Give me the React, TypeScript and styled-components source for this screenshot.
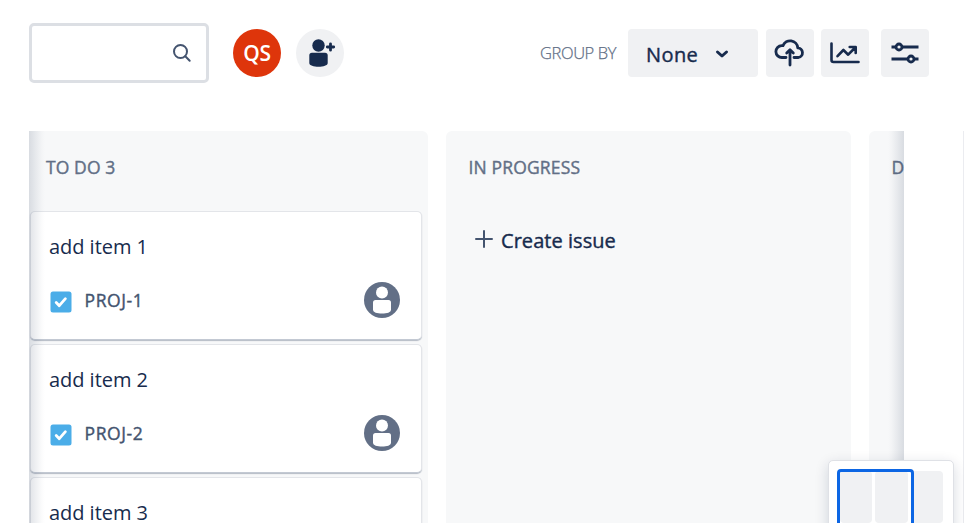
import React from "react";
import styled, { createGlobalStyle } from "styled-components";

const GlobalStyle = createGlobalStyle`
  * { box-sizing: border-box; }
  body {
    margin: 0;
    background: #fff;
    color: #172b4d;
    font-family: "Segoe UI", "Open Sans", "Noto Sans", sans-serif;
    overflow: hidden;
  }
  button { font: inherit; color: inherit; border: 0; padding: 0; cursor: pointer; }
`;

const Page = styled.div`
  position: relative;
  width: 964px;
  height: 523px;
  overflow: hidden;
`;

const Toolbar = styled.header`
  display: flex;
  align-items: center;
  height: 60px;
  margin: 23px 35px 0 29px;
`;

const SearchField = styled.label`
  display: flex;
  align-items: center;
  justify-content: flex-end;
  width: 180px;
  height: 60px;
  padding-right: 14px;
  border: 3px solid #dcdfe4;
  border-radius: 5px;
`;

const SearchInput = styled.input`
  flex: 1;
  min-width: 0;
  border: 0;
  outline: 0;
  background: transparent;
  font: inherit;
`;

const Round = styled.button<{ $bg: string; $gap: number }>`
  display: grid;
  place-items: center;
  width: 48px;
  height: 48px;
  margin-left: ${(p) => p.$gap}px;
  border-radius: 50%;
  background: ${(p) => p.$bg};
`;

const Initials = styled.span`
  color: #fff;
  font-size: 21px;
  font-weight: 600;
  letter-spacing: -0.2px;
  line-height: 48px;
`;

const Actions = styled.div`
  display: flex;
  align-items: center;
  margin-left: auto;
`;

const GroupLabel = styled.span`
  margin: -2px 12px 0 0;
  width: 76px;
  white-space: nowrap;
  color: #626f86;
  font-size: 16.5px;
  font-weight: 300;
  letter-spacing: -0.4px;
  -webkit-text-stroke: 0.25px;
`;

const GroupSelect = styled.button`
  display: flex;
  align-items: center;
  width: 130px;
  height: 48px;
  padding: 3px 29px 0 18px;
  justify-content: space-between;
  border-radius: 4px;
  background: #f0f1f3;
  font-size: 20px;
  letter-spacing: 0.4px;
  -webkit-text-stroke: 0.4px;
`;

const ToolButton = styled.button<{ $gap: number }>`
  display: grid;
  place-items: center;
  width: 48px;
  height: 48px;
  margin-left: ${(p) => p.$gap}px;
  border-radius: 4px;
  background: #f0f1f3;
`;

const BoardRow = styled.div`
  display: flex;
  justify-content: space-between;
  margin: 48px 0 0 29px;
  height: 392px;
`;

const Board = styled.main`
  position: relative;
  display: flex;
  gap: 18px;
  width: 875px;
  overflow: hidden;
`;

const EdgeShade = styled.div<{ $side: "left" | "right" }>`
  position: absolute;
  top: 0;
  bottom: 0;
  ${(p) => p.$side}: 0;
  width: 16px;
  pointer-events: none;
  background: linear-gradient(
    to ${(p) => (p.$side === "left" ? "right" : "left")},
    rgba(9, 30, 66, 0.13),
    rgba(9, 30, 66, 0.07) 40%,
    rgba(9, 30, 66, 0.015) 80%,
    transparent
  );
`;

const PageEdge = styled.div`
  width: 1px;
  background: #ebecf0;
`;

const Column = styled.section<{ $first?: boolean }>`
  flex: none;
  width: ${(p) => (p.$first ? 399 : 405)}px;
  padding: ${(p) => (p.$first ? "0 6px 0 1px" : "0")};
  border-radius: ${(p) => (p.$first ? "0 6px 0 0" : "6px 6px 0 0")};
  background: #f7f8f9;
`;

const ColumnTitle = styled.h2<{ $inset: number; $track: number }>`
  height: 80px;
  margin: 0;
  padding: 23px 0 0 ${(p) => p.$inset}px;
  color: #626f86;
  font-size: 17.5px;
  line-height: 26px;
  font-weight: 400;
  letter-spacing: ${(p) => p.$track}px;
  -webkit-text-stroke: 0.4px;
  white-space: nowrap;
`;

const Card = styled.article`
  height: 129px;
  margin-bottom: 4px;
  padding: 20px 21px 0 18px;
  border: 1px solid #e3e5e9;
  border-bottom-color: #c3c9d3;
  border-radius: 5px;
  background: #fff;
  box-shadow: 0 1px 1px rgba(9, 30, 66, 0.28);
`;

const CardTitle = styled.div`
  height: 49px;
  font-size: 20px;
  line-height: 30px;
  letter-spacing: -0.04px;
`;

const CardFooter = styled.div`
  display: flex;
  align-items: center;
  height: 38px;
`;

const IssueKey = styled.span`
  margin-left: 12.500px;
  color: #44546f;
  font-size: 17.5px;
  line-height: 36px;
  letter-spacing: 0.6px;
  -webkit-text-stroke: 0.4px;
  transform: translateY(-0.500px);
`;

const Assignee = styled.svg`
  margin-left: auto;
`;

const TaskIcon = styled.svg`
  margin: 3px 0 0 1px;
`;

const CreateIssue = styled.button`
  display: flex;
  align-items: center;
  gap: 8px;
  height: 32px;
  margin: 14px 0 0 29px;
  background: none;
  font-size: 20px;
  line-height: 32px;
  letter-spacing: 0.05px;
  -webkit-text-stroke: 0.4px;
`;

const PlusIcon = styled.svg`
  margin-top: -5px;
`;

const Minimap = styled.aside`
  position: absolute;
  left: 828px;
  top: 460px;
  display: flex;
  gap: 3px;
  width: 126px;
  height: 90px;
  padding: 10px 10px 10px 11px;
  border: 1px solid #dfe1e6;
  border-radius: 5px;
  background: #fff;
  box-shadow: 0 4px 14px rgba(9, 30, 66, 0.16);
`;

const MiniColumn = styled.div`
  flex: 1;
  height: 52px;
  border-radius: 4px;
  background: #f0f1f3;
`;

const Viewport = styled.div`
  position: absolute;
  left: 8px;
  top: 8px;
  width: 77px;
  height: 70px;
  border: 3px solid #0c66e4;
  border-radius: 4px;
`;

function IssueCard({ title, issueKey }: { title: string; issueKey: string }) {
  return (
    <Card>
      <CardTitle>{title}</CardTitle>
      <CardFooter>
        <TaskIcon width="22" height="22" viewBox="0 0 22 22">
          <rect x="0.5" y="0.5" width="21" height="21" rx="2.5" fill="#4bade8" />
          <path d="M6.2 11.5 9.3 14.7 15.4 7.7" fill="none" stroke="#fff" strokeWidth="2.8" strokeLinecap="round" strokeLinejoin="round" />
        </TaskIcon>
        <IssueKey>{issueKey}</IssueKey>
        <Assignee width="36" height="36" viewBox="0 0 36 36">
          <circle cx="18" cy="18" r="18" fill="#626f86" />
          <circle cx="18" cy="10.5" r="6" fill="#fff" />
          <path d="M9 20.500q0-2.500 2.500-2.500h13q2.500 0 2.500 2.500v7c0 3-4 4-9 4s-9-1-9-4z" fill="#fff" />
        </Assignee>
      </CardFooter>
    </Card>
  );
}

const issues = [1, 2, 3];

export default function App() {
  return (
    <Page>
      <GlobalStyle />
      <Toolbar>
        <SearchField>
          <SearchInput aria-label="Search board" />
          <svg width="20" height="20" viewBox="0 0 20 20" fill="none" stroke="#44546f" strokeWidth="2" strokeLinecap="round">
            <circle cx="8.500" cy="8.500" r="6.500" />
            <path d="M13.300 13.300 17.700 17.700" />
          </svg>
        </SearchField>
        <Round $bg="#de350b" $gap={24}>
          <Initials>QS</Initials>
        </Round>
        <Round $bg="#f0f1f3" $gap={15} aria-label="Add people">
          <svg width="48" height="48" viewBox="0 0 48 48" fill="#172b4d">
            <circle cx="22.500" cy="16.500" r="6.200" />
            <path d="M13.300 26.500q0-2.700 2.700-2.700h13q2.700 0 2.700 2.700v7.500c0 2.700-4.500 3.700-9.200 3.700s-9.200-1-9.200-3.700z" />
            <path d="M34.500 14.800v6.400M31.300 18h6.400" stroke="#172b4d" strokeWidth="2.800" strokeLinecap="round" />
          </svg>
        </Round>
        <Actions>
          <GroupLabel>GROUP BY</GroupLabel>
          <GroupSelect>
            None
            <svg width="14" height="12" viewBox="0 0 14 12" fill="none" stroke="#172b4d" strokeWidth="3" strokeLinecap="round" strokeLinejoin="round">
              <path d="M2.500 3 7 7 11.500 3" />
            </svg>
          </GroupSelect>
          <ToolButton $gap={8} aria-label="Import">
            <svg width="48" height="48" viewBox="0 0 48 48" fill="none" stroke="#172b4d" strokeWidth="2.800" strokeLinecap="round" strokeLinejoin="round">
              <path d="M20 28.500H16a5.700 5.700 0 0 1-.3-11.900h1.300a7.700 7.700 0 0 1 14.800 2.200A4.900 4.900 0 0 1 32.500 28.500H28" />
              <path d="M24 36V22M20.700 24 24 20.800 27.300 24" />
            </svg>
          </ToolButton>
          <ToolButton $gap={7} aria-label="Insights">
            <svg width="48" height="48" viewBox="0 0 48 48" fill="none" stroke="#172b4d" strokeWidth="2.600" strokeLinecap="round" strokeLinejoin="round">
              <path d="M10.500 14.500V31a2 2 0 0 0 2 2H37.500" />
              <path d="M16.500 27.200 22.400 21 27.200 25.700 34.300 18.500M28.700 18h6v6" />
            </svg>
          </ToolButton>
          <ToolButton $gap={12} aria-label="View settings">
            <svg width="48" height="48" viewBox="0 0 48 48" fill="#f0f1f3" stroke="#172b4d" strokeWidth="2.800">
              <path d="M10.500 18h27M10.500 30h27" />
              <circle cx="18" cy="18" r="3" />
              <circle cx="30" cy="30" r="3" />
            </svg>
          </ToolButton>
        </Actions>
      </Toolbar>

      <BoardRow>
        <Board>
          <Column $first>
            <ColumnTitle $inset={16} $track={0.1}>TO DO 3</ColumnTitle>
            {issues.map((n) => (
              <IssueCard key={n} title={`add item ${n}`} issueKey={`PROJ-${n}`} />
            ))}
          </Column>
          <Column>
            <ColumnTitle $inset={22.5} $track={0.15}>IN PROGRESS</ColumnTitle>
            <CreateIssue>
              <PlusIcon width="18" height="18" viewBox="0 0 18 18" stroke="#44546f" strokeWidth="2" strokeLinecap="round">
                <path d="M9 1v16M1 9h16" />
              </PlusIcon>
              Create issue
            </CreateIssue>
          </Column>
          <Column>
            <ColumnTitle $inset={22.5} $track={0.1}>DONE</ColumnTitle>
          </Column>
          <EdgeShade $side="left" />
          <EdgeShade $side="right" />
        </Board>
        <PageEdge />
      </BoardRow>

      <Minimap>
        <MiniColumn />
        <MiniColumn />
        <MiniColumn />
        <Viewport />
      </Minimap>
    </Page>
  );
}
